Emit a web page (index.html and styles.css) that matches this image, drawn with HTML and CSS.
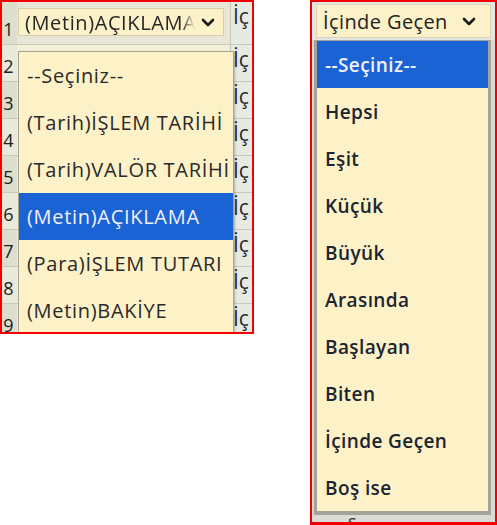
FILE: index.html
```html
<!DOCTYPE html>
<html lang="tr">
<head>
<meta charset="utf-8">
<link rel="stylesheet" href="styles.css">
</head>
<body>
<div class="shot shot-left">
  <div class="grid">
    <div class="num">1</div>
    <div class="cell cell-select">
      <div class="select">
        <span class="select-text">(Metin)AÇIKLAMA</span>
        <svg class="chev" width="14" height="9" viewBox="0 0 14 9"><polyline points="2,2 7,7 12,2" fill="none" stroke="#1b1b1b" stroke-width="2.6" stroke-linecap="round" stroke-linejoin="round"/></svg>
      </div>
    </div>
    <div class="cell cell-side">İç</div>

    <div class="num alt">2</div><div class="cell"></div><div class="cell cell-side">İç</div>
    <div class="num">3</div><div class="cell"></div><div class="cell cell-side">İç</div>
    <div class="num alt">4</div><div class="cell"></div><div class="cell cell-side">İç</div>
    <div class="num">5</div><div class="cell"></div><div class="cell cell-side">İç</div>
    <div class="num alt">6</div><div class="cell"></div><div class="cell cell-side">İç</div>
    <div class="num">7</div><div class="cell"></div><div class="cell cell-side">İç</div>
    <div class="num alt">8</div><div class="cell"></div><div class="cell cell-side">İç</div>
    <div class="num">9</div><div class="cell"></div><div class="cell cell-side">İç</div>
  </div>
  <ul class="menu menu-left">
    <li>--Seçiniz--</li>
    <li>(Tarih)İŞLEM TARİHİ</li>
    <li>(Tarih)VALÖR TARİHİ</li>
    <li class="active">(Metin)AÇIKLAMA</li>
    <li>(Para)İŞLEM TUTARI</li>
    <li>(Metin)BAKİYE</li>
  </ul>
</div>

<div class="shot shot-right">
  <div class="rgrid">
    <div class="rcell rcell-top">
      <div class="select select-right">
        <span>İçinde Geçen</span>
        <svg class="chev" width="14" height="9" viewBox="0 0 14 9"><polyline points="2,2 7,7 12,2" fill="none" stroke="#1b1b1b" stroke-width="2.6" stroke-linecap="round" stroke-linejoin="round"/></svg>
      </div>
    </div>
    <div class="rcell rcell-fill"><span class="peek">ş</span></div>
  </div>
  <ul class="menu menu-right">
    <li class="active">--Seçiniz--</li>
    <li>Hepsi</li>
    <li>Eşit</li>
    <li>Küçük</li>
    <li>Büyük</li>
    <li>Arasında</li>
    <li>Başlayan</li>
    <li>Biten</li>
    <li>İçinde Geçen</li>
    <li>Boş ise</li>
  </ul>
</div>
</body>
</html>
```

FILE: styles.css
```css
* { box-sizing: border-box; }

html, body {
  margin: 0;
  padding: 0;
  background: #ffffff;
}

body {
  display: flex;
  align-items: flex-start;
  font-family: "Open Sans", "Noto Sans", sans-serif;
  color: #222222;
}

.shot {
  position: relative;
  border: 2px solid #f00000;
  overflow: hidden;
  background: #d9d9cb;
}

.shot-left {
  width: 254px;
  height: 334px;
}

.shot-right {
  width: 187px;
  height: 525px;
  margin-left: 56px;
  border-width: 2px 2px 3px 2px;
}

/* ---------- left grid ---------- */
.grid {
  display: grid;
  grid-template-columns: 15px 213px 30px;
  grid-template-rows: 43px repeat(8, 37px);
}

.num {
  background: #dedecf;
  border-bottom: 1px solid #c9c9b8;
  font-size: 18px;
  line-height: 1;
  color: #1d1d1d;
  display: flex;
  align-items: flex-end;
  justify-content: center;
  padding-bottom: 6px;
  padding-right: 2px;
}

.num.alt { background: #e9e9dc; }

.cell {
  background: #f3efd9;
  border-bottom: 1px solid #c9c9b8;
}

.cell-select {
  padding: 6px 6px 0 1px;
  background: #e8e6d6;
}

.cell-side {
  background: #e7e9e3;
  border-left: 1px solid #c4c6bc;
  font-size: 21px;
  color: #2b2b2b;
  padding: 2px 0 0 2px;
  overflow: hidden;
  white-space: nowrap;
  line-height: 1.2;
}

.select {
  height: 28px;
  background: #fcf1c8;
  border: 1px solid #d6cfae;
  display: flex;
  align-items: center;
  padding: 0 8px 0 6px;
  font-size: 20px;
  letter-spacing: 0.6px;
  color: #262626;
}

.select-text {
  flex: 1;
  overflow: hidden;
  white-space: nowrap;
  -webkit-mask-image: linear-gradient(to right, #000 92%, transparent 100%);
  mask-image: linear-gradient(to right, #000 92%, transparent 100%);
}

.chev { flex: none; margin-left: 6px; }

/* ---------- menus ---------- */
.menu {
  position: absolute;
  list-style: none;
  margin: 0;
  padding: 0;
  background: #fdf1c7;
}

.menu li {
  height: 47px;
  display: flex;
  align-items: center;
  white-space: nowrap;
}

.menu li.active {
  background: #1a63d4;
  color: #f2f0ff;
}

.menu-left {
  left: 16px;
  top: 49px;
  width: 216px;
  border: 1px solid #a9a593;
  box-shadow: 1px 1px 2px rgba(0,0,0,0.25);
  font-size: 20px;
  letter-spacing: 0.7px;
  color: #2a2a2a;
}

.menu-left li { padding-left: 8px; }

/* ---------- right ---------- */
.rgrid {
  display: grid;
  grid-template-rows: 38px 1fr;
  height: 100%;
  background: #dfe1dd;
}

.rcell-top {
  padding: 2px 4px 0 4px;
  background: #e3e6e3;
}

.select-right {
  height: 34px;
  padding: 0 14px 0 6px;
  justify-content: space-between;
  font-size: 20px;
  letter-spacing: 0.4px;
  color: #222222;
  border-color: #dcd6b8;
}

.rcell-fill {
  position: relative;
  background: #d9dbd4;
}

.peek {
  position: absolute;
  left: 36px;
  bottom: -8px;
  font-size: 18px;
  line-height: 1;
  color: #333;
}

.menu-right {
  left: 2px;
  top: 38px;
  width: 177px;
  border: 3px solid #a3a39a;
  border-top-width: 1px;
  border-bottom-width: 4px;
  font-size: 19px;
  letter-spacing: 0.4px;
  font-weight: 600;
  color: #1b2431;
}

.menu-right li { padding-left: 8px; }
```
